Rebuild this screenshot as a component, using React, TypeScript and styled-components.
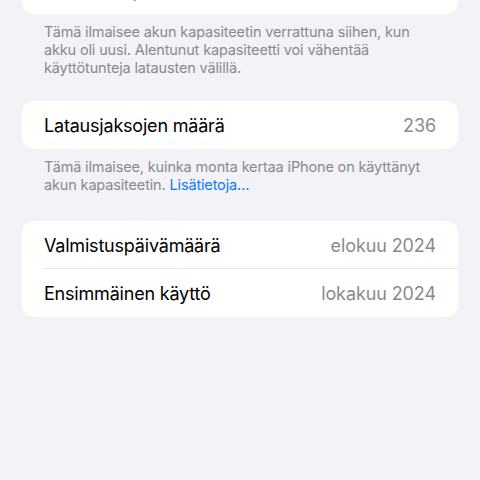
import React from "react";
import styled, { createGlobalStyle } from "styled-components";

const GlobalStyle = createGlobalStyle`
  html, body {
    margin: 0;
    padding: 0;
    background: #f2f2f7;
  }
  body {
    font-family: Inter, "Noto Sans", "Liberation Sans", sans-serif;
    -webkit-font-smoothing: antialiased;
  }
`;

const Screen = styled.div`
  width: 480px;
  height: 480px;
  overflow: hidden;
  background: #f2f2f7;
  display: flex;
  flex-direction: column;
  padding: 0 22px;
  box-sizing: border-box;
`;

const Section = styled.section<{ $offset?: number }>`
  display: flex;
  flex-direction: column;
  margin-top: ${(p) => p.$offset ?? 25}px;
`;

const Card = styled.div`
  background: #ffffff;
  border-radius: 12px;
  display: flex;
  flex-direction: column;
  overflow: hidden;
`;

const Row = styled.div<{ $divider?: boolean }>`
  position: relative;
  height: 48px;
  display: flex;
  align-items: center;
  justify-content: space-between;
  padding: 0 22px;
  ${(p) =>
    p.$divider &&
    `
    &::after {
      content: "";
      position: absolute;
      left: 22px;
      right: 0;
      bottom: 0;
      height: 1px;
      background: #e3e3e8;
    }
  `}
`;

const Label = styled.span`
  font-size: 18px;
  color: #000000;
  letter-spacing: -0.2px;
  padding-top: 1px;
`;

const Value = styled.span`
  font-size: 18px;
  color: #8a8a8e;
  letter-spacing: -0.1px;
  padding-top: 1px;
`;

const Footer = styled.p`
  margin: 0;
  padding: 9px 4px 0 22px;
  font-size: 14.5px;
  line-height: 18px;
  color: #8a8a8e;
  letter-spacing: -0.15px;
`;

const Link = styled.a`
  color: #0a7aff;
  text-decoration: none;
`;

export default function App() {
  return (
    <>
      <GlobalStyle />
      <Screen>
        <Section $offset={-34}>
          <Card>
            <Row>
              <Label>Maksimikapasiteetti</Label>
              <Value>100 %</Value>
            </Row>
          </Card>
          <Footer>
            Tämä ilmaisee akun kapasiteetin verrattuna siihen, kun
            <br />
            akku oli uusi. Alentunut kapasiteetti voi vähentää
            <br />
            käyttötunteja latausten välillä.
          </Footer>
        </Section>

        <Section $offset={24}>
          <Card>
            <Row>
              <Label>Latausjaksojen määrä</Label>
              <Value>236</Value>
            </Row>
          </Card>
          <Footer>
            Tämä ilmaisee, kuinka monta kertaa iPhone on käyttänyt
            <br />
            akun kapasiteetin. <Link href="#">Lisätietoja…</Link>
          </Footer>
        </Section>

        <Section $offset={27}>
          <Card>
            <Row $divider>
              <Label>Valmistuspäivämäärä</Label>
              <Value>elokuu 2024</Value>
            </Row>
            <Row>
              <Label>Ensimmäinen käyttö</Label>
              <Value>lokakuu 2024</Value>
            </Row>
          </Card>
        </Section>
      </Screen>
    </>
  );
}
